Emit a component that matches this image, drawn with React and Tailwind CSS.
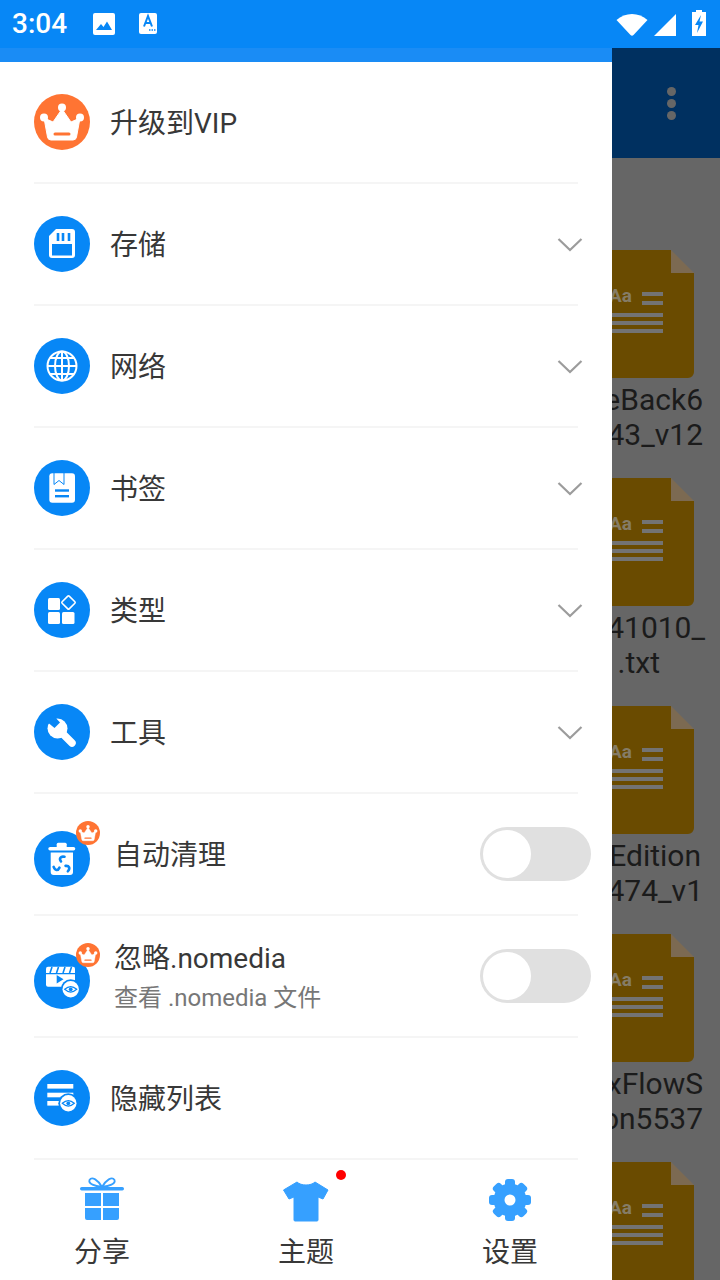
import React from 'react';

const FONT = "font-['Roboto','Noto_Sans_CJK_SC',sans-serif]";

const Crown = ({ size = 56 }) => (
  <svg width={size} height={size} viewBox="0 0 56 56">
    <circle cx="28" cy="28" r="28" fill="#ff7433" />
    <circle cx="28" cy="13.5" r="4" fill="#fff" />
    <circle cx="10" cy="23.5" r="4" fill="#fff" />
    <circle cx="46" cy="23.5" r="4" fill="#fff" />
    <path d="M28 15 L37 28 L46 24 L42.5 43 Q42 46 39 46 H17 Q14 46 13.5 43 L10 24 L19 28 Z" fill="#fff" stroke="#fff" strokeLinejoin="round" />
    <rect x="19.5" y="38.5" width="17" height="3" rx="1.5" fill="#ff7433" />
  </svg>
);

const Eye = ({ cx, cy, r }) => (
  <g>
    <circle cx={cx} cy={cy} r={r} fill="#fff" />
    <path d={`M${cx - 6} ${cy} Q${cx} ${cy - 5.5} ${cx + 6} ${cy} Q${cx} ${cy + 5.5} ${cx - 6} ${cy} Z`} fill="none" stroke="#0787f6" strokeWidth="1.2" />
    <circle cx={cx} cy={cy} r="1.9" fill="#0787f6" />
  </g>
);

const icons = {
  sd: (
    <>
      <path d="M22 13 H38 a3 3 0 0 1 3 3 V39 a3 3 0 0 1 -3 3 H18 a3 3 0 0 1 -3 -3 V20 Z" fill="#fff" />
      <rect x="22.7" y="17" width="2.6" height="8" fill="#0787f6" />
      <rect x="27.7" y="17" width="2.6" height="8" fill="#0787f6" />
      <rect x="33.7" y="17" width="2.6" height="8" fill="#0787f6" />
      <rect x="18" y="28" width="20" height="11.5" fill="#0787f6" />
    </>
  ),
  globe: (
    <g fill="none" stroke="#fff" strokeWidth="2">
      <circle cx="28" cy="28" r="14.5" />
      <ellipse cx="28" cy="28" rx="7" ry="14.5" />
      <path d="M28 13.5 V42.5 M13.5 28 H42.5 M16 20 H40 M16 36 H40" />
    </g>
  ),
  book: (
    <>
      <rect x="15.3" y="13.3" width="25.7" height="29.4" rx="3" fill="#fff" />
      <path d="M20 13 V24.5 L25 20.5 L30 24.5 V13" fill="none" stroke="#0787f6" strokeWidth="1" />
      <rect x="21" y="29.3" width="14" height="2.4" fill="#0787f6" />
      <rect x="21" y="35" width="14" height="2.4" fill="#0787f6" />
    </>
  ),
  grid: (
    <>
      <rect x="14" y="16" width="12" height="12" rx="1.5" fill="#fff" />
      <rect x="14" y="30" width="12" height="12" rx="1.5" fill="#fff" />
      <rect x="28" y="30" width="12.5" height="12" rx="1.5" fill="#fff" />
      <rect x="29.5" y="15.5" width="10" height="10" rx="1" transform="rotate(45 34.5 20.5)" fill="none" stroke="#fff" strokeWidth="1.6" />
    </>
  ),
  wrench: (
    <>
      <circle cx="23.5" cy="24.5" r="10" fill="#fff" />
      <path d="M26 27 L38 39" stroke="#fff" strokeWidth="7.5" strokeLinecap="round" />
      <path d="M12 17 L19 11 L26 18.5 L20.5 24 Z" fill="#0787f6" />
    </>
  ),
  trash: (
    <>
      <rect x="14.3" y="16" width="27" height="3.6" rx="1.8" fill="#fff" />
      <rect x="22.7" y="11.7" width="10" height="5" rx="1.5" fill="#fff" />
      <path d="M16.7 21.5 H39 V41 a3 3 0 0 1 -3 3 H19.7 a3 3 0 0 1 -3 -3 Z" fill="#fff" />
      <g fill="none" stroke="#0787f6" strokeWidth="2.6" strokeLinecap="round">
        <path d="M27 30.5 C24.8 27.5 26.5 25 30.5 25.8" />
        <path d="M27 30.5 C24.8 27.5 26.5 25 30.5 25.8" transform="rotate(120 28 34)" />
        <path d="M27 30.5 C24.8 27.5 26.5 25 30.5 25.8" transform="rotate(240 28 34)" />
      </g>
    </>
  ),
  video: (
    <>
      <path d="M14 13.7 H39 a2 2 0 0 1 2 2 V20 H12 V15.7 a2 2 0 0 1 2 -2 Z" fill="#fff" />
      <path d="M18 14 L16 20 M24.5 14 L22.5 20 M31 14 L29 20 M37.5 14 L35.5 20" stroke="#0787f6" strokeWidth="1.6" />
      <path d="M12 21.3 H41 V31.7 a2 2 0 0 1 -2 2 H14 a2 2 0 0 1 -2 -2 Z" fill="#fff" />
      <path d="M22.7 22 L29.5 26.2 L22.7 30.5 Z" fill="#0787f6" />
      <circle cx="36.7" cy="36.3" r="10" fill="#0787f6" />
      <Eye cx={36.7} cy={36.3} r={8.2} />
    </>
  ),
  hidden: (
    <>
      <rect x="13.3" y="14" width="26" height="4.6" fill="#fff" />
      <rect x="13.3" y="22.7" width="26" height="4.6" fill="#fff" />
      <rect x="13.3" y="31" width="13" height="4.6" fill="#fff" />
      <circle cx="34.3" cy="33.3" r="10" fill="#0787f6" />
      <Eye cx={34.3} cy={33.3} r={8.2} />
    </>
  ),
};

const MenuIcon = ({ name, vip }) => (
  <div className={`relative w-14 h-14 shrink-0 rounded-full bg-[#0787f6] ${vip ? 'mt-[10px]' : ''}`}>
    <svg width="56" height="56" viewBox="0 0 56 56">{icons[name]}</svg>
    {vip && (
      <div className="absolute left-[42px] -top-[10px]">
        <Crown size={24} />
      </div>
    )}
  </div>
);

const Chevron = () => (
  <svg width="26" height="16" viewBox="0 0 26 16" className="ml-auto -mr-[5px] mt-[2px]">
    <path d="M1.5 2 L13 13 L24.5 2" fill="none" stroke="#9c9c9c" strokeWidth="2.2" />
  </svg>
);

const Toggle = () => (
  <div className="ml-auto -mr-[13px] w-[111px] h-[54px] rounded-full bg-[#e0e0e0] p-[3px]">
    <div className="w-12 h-12 rounded-full bg-white" />
  </div>
);

const Divider = () => <div className="h-[2px] mx-[34px] bg-[#f5f5f5]" />;

const Row = ({ children }) => (
  <>
    <div className="h-[120px] px-[34px] flex items-center">{children}</div>
    <Divider />
  </>
);

const expandable = [
  ['sd', '存储'],
  ['globe', '网络'],
  ['book', '书签'],
  ['grid', '类型'],
  ['wrench', '工具'],
];

const Drawer = () => (
  <div className="w-[612px] shrink-0 h-full flex flex-col bg-white">
    <div className="h-[14px] shrink-0 bg-[#1a8cf5]" />
    <div className="flex-1 min-h-0 overflow-hidden text-[28px] leading-9 text-[#383838]">
      <Row>
        <Crown />
        <span className="ml-5 pt-[4px]">升级到VIP</span>
      </Row>
      {expandable.map(([icon, label]) => (
        <Row key={icon}>
          <MenuIcon name={icon} />
          <span className="ml-5 pt-[4px]">{label}</span>
          <Chevron />
        </Row>
      ))}
      <Row>
        <MenuIcon name="trash" vip />
        <span className="ml-[24px] pt-[4px]">自动清理</span>
        <Toggle />
      </Row>
      <Row>
        <MenuIcon name="video" vip />
        <div className="ml-[24px] pt-[7px]">
          <div className="leading-[34px]">忽略.nomedia</div>
          <div className="mt-[3px] text-2xl leading-[38px] text-[#777777]">查看 .nomedia 文件</div>
        </div>
        <Toggle />
      </Row>
      <Row>
        <MenuIcon name="hidden" />
        <span className="ml-5 pt-[4px]">隐藏列表</span>
      </Row>
    </div>
    <div className="h-[119px] shrink-0 grid grid-cols-3 bg-white text-[28px] leading-9 text-[#383838]">
      <div className="flex flex-col items-center pt-[14px]">
        <svg width="48" height="48" viewBox="0 0 48 48">
          <path d="M24 12 C20 5 14 1 11.5 5 C10 9 17 11 24 12 C31 11 38 9 36.5 5 C34 1 28 5 24 12 Z" fill="none" stroke="#36a0ff" strokeWidth="1.8" />
          <rect x="2" y="12" width="44" height="3.5" rx="1.7" fill="#36a0ff" />
          <path d="M7 18 H23 V31 H7 Z M25 18 H41 V31 H25 Z M7 33 H23 V45 H9 a2 2 0 0 1 -2 -2 Z M25 33 H41 V43 a2 2 0 0 1 -2 2 H25 Z" fill="#36a0ff" />
        </svg>
        <span className="mt-[12px]">分享</span>
      </div>
      <div className="relative flex flex-col items-center pt-[14px]">
        <svg width="48" height="48" viewBox="0 0 48 48">
          <path d="M15 7 C19 11 29 11 33 7 L46 15 L41 24 L36 22 V45 a1 1 0 0 1 -1 1 H13 a1 1 0 0 1 -1 -1 V22 L7 24 L1.5 15 Z" fill="#36a0ff" stroke="#36a0ff" strokeLinejoin="round" />
        </svg>
        <span className="mt-[12px]">主题</span>
        <div className="absolute left-[132px] top-[9px] w-[10px] h-[10px] rounded-full bg-[#ff0000]" />
      </div>
      <div className="flex flex-col items-center pt-[14px]">
        <svg width="48" height="48" viewBox="0 0 48 48">
          <circle cx="24" cy="25" r="16.5" fill="#36a0ff" />
          <g fill="#36a0ff">
            <rect x="19" y="4" width="10" height="42" rx="3" />
            <rect x="19" y="4" width="10" height="42" rx="3" transform="rotate(45 24 25)" />
            <rect x="19" y="4" width="10" height="42" rx="3" transform="rotate(90 24 25)" />
            <rect x="19" y="4" width="10" height="42" rx="3" transform="rotate(135 24 25)" />
          </g>
          <circle cx="24" cy="25" r="5.5" fill="#fff" />
        </svg>
        <span className="mt-[12px]">设置</span>
      </div>
    </div>
  </div>
);

const FileIcon = () => (
  <svg width="82" height="128" viewBox="530 0 82 128" className="block">
    <path d="M530 0 H589 V23 H612 V122 a6 6 0 0 1 -6 6 H530 Z" fill="#6a4b00" />
    <path d="M589 0 L612 23 H589 Z" fill="#7c6a52" />
    <text x="527" y="52" fontSize="19" fontWeight="700" fontFamily="Roboto" fill="#857c66">Aa</text>
    <rect x="560" y="42" width="21" height="4" fill="#737373" />
    <rect x="560" y="51" width="21" height="4" fill="#737373" />
    <rect x="530" y="63" width="51" height="4" fill="#737373" />
    <rect x="530" y="71" width="51" height="4" fill="#737373" />
    <rect x="530" y="79" width="51" height="4" fill="#737373" />
  </svg>
);

const files = [
  [['eBack6', 'pr-[17px]'], ['43_v12', 'pr-[17px]']],
  [['41010_', 'pr-[15px]'], ['.txt', 'pr-[60px]']],
  [['Edition', 'pr-[19px]'], ['474_v1', 'pr-[17px]']],
  [['xFlowS', 'pr-[17px]'], ['on5537', 'pr-[17px]']],
];

const Behind = () => (
  <div className="flex-1 min-w-0 h-full flex flex-col overflow-hidden bg-[#666666]">
    <div className="h-[110px] shrink-0 flex flex-col items-center justify-center gap-[3px] bg-[#003060] pl-[11px]">
      <div className="w-[9px] h-[9px] rounded-full bg-[#666666]" />
      <div className="w-[9px] h-[9px] rounded-full bg-[#666666]" />
      <div className="w-[9px] h-[9px] rounded-full bg-[#666666]" />
    </div>
    <div className="pt-[92px] flex flex-col gap-[15px]">
      {files.map((lines, i) => (
        <div key={i} className="h-[213px]">
          <FileIcon />
          <div className="mt-[4px] text-[30px] leading-[35px] text-[#1b1b1b] whitespace-nowrap">
            {lines.map(([text, pad]) => (
              <div key={text} className={`flex justify-end ${pad}`}>{text}</div>
            ))}
          </div>
        </div>
      ))}
      <FileIcon />
    </div>
  </div>
);

const StatusBar = () => (
  <div className="h-12 shrink-0 flex items-center bg-[#0787f6] text-white pl-3 pr-[14px]">
    <span className="text-[28px] font-medium leading-none">3:04</span>
    <svg width="24" height="24" viewBox="0 0 24 24" className="ml-[25px]">
      <rect x="1" y="1" width="22" height="22" rx="2" fill="#fff" />
      <path d="M4 18 L9 12 L11.5 15 L15 9.5 L20 18 Z" fill="#0787f6" />
    </svg>
    <svg width="20" height="22" viewBox="0 0 20 22" className="ml-[22px]">
      <rect x="1" y="0" width="18" height="21" rx="2" fill="#fff" />
      <path d="M6 13.5 L10 3 L14 13.5 M7.5 10 H12.5" fill="none" stroke="#0787f6" strokeWidth="2" />
      <path d="M11 17 H12.5 M13.5 17 H15 M16 17 H17.5" stroke="#0787f6" strokeWidth="1.6" />
    </svg>
    <svg width="32" height="24" viewBox="0 0 32 24" className="ml-auto">
      <path d="M0.5 8 C9 0 23 0 31.5 8 L17.5 23 Q16 24.5 14.5 23 Z" fill="#fff" />
    </svg>
    <svg width="22" height="22" viewBox="0 0 22 22" className="ml-[6px] mt-[2px]">
      <path d="M22 0 V22 H0 Z" fill="#fff" />
    </svg>
    <svg width="14" height="26" viewBox="0 0 14 26" className="ml-[16px] mb-[2px]">
      <path d="M4 0 H10 V2 H14 V26 H0 V2 H4 Z" fill="#fff" />
      <path d="M9 5 L3 15 H6.5 L5 23 L11 11.5 H7.5 Z" fill="#0787f6" />
    </svg>
  </div>
);

export default function App() {
  return (
    <div className={`w-[720px] h-[1280px] flex flex-col overflow-hidden ${FONT}`}>
      <StatusBar />
      <div className="flex-1 min-h-0 flex">
        <Drawer />
        <Behind />
      </div>
    </div>
  );
}
